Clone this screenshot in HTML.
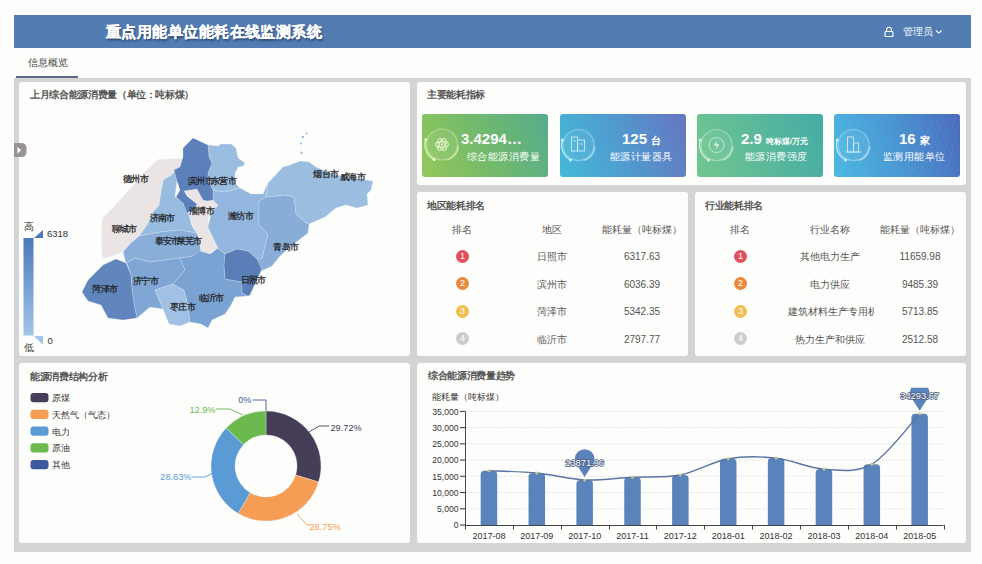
<!DOCTYPE html>
<html><head><meta charset="utf-8">
<style>
*{margin:0;padding:0;box-sizing:border-box}
html,body{width:982px;height:564px;overflow:hidden;background:#fdfdfb;font-family:"Liberation Sans",sans-serif;color:#555}
.abs{position:absolute}
#hdr{left:14px;top:15px;width:957px;height:33px;background:#527cb2}
#title{left:106px;top:19px;font-size:15px;font-weight:bold;color:#fff;letter-spacing:0.45px;-webkit-text-stroke:0.3px #fff;text-shadow:1px 2px 2px rgba(20,30,60,.6);white-space:nowrap;line-height:26px}
#user{left:903px;top:25px;font-size:10px;color:#fff;line-height:13px;white-space:nowrap}
#tab{left:28px;top:57px;font-size:10px;color:#444;line-height:12px}
#tabline{left:16px;top:76px;width:62px;height:2px;background:#5b6b86}
#frame{left:14px;top:78px;width:957px;height:474px;background:#d4d4d6}
.pnl{position:absolute;background:#fdfdfb;border-radius:3px}
.ttl{position:absolute;font-size:10px;font-weight:bold;color:#555;letter-spacing:-0.35px;white-space:nowrap;line-height:12px}
.card{position:absolute;top:114px;width:126px;height:63px;border-radius:3px;overflow:hidden}
.val{position:absolute;color:#fff;font-weight:bold;white-space:nowrap}
.lbl{position:absolute;color:#fff;font-size:10px;letter-spacing:0.45px;white-space:nowrap;line-height:12px}
.row{position:absolute;font-size:10px;color:#555;white-space:nowrap;line-height:12px;text-align:center}
.badge{position:absolute;width:13px;height:13px;border-radius:50%;color:#fff;font-size:9px;line-height:13px;text-align:center}
svg{position:absolute;left:0;top:0}
</style></head><body>
<div id="hdr" class="abs"></div>
<div id="title" class="abs">重点用能单位能耗在线监测系统</div>
<svg width="982" height="564" style="z-index:2">
  <!-- lock icon -->
  <g stroke="#fff" stroke-width="1.1" fill="none">
    <path d="M886.5 31.5 v-1.8 a2.5 2.5 0 0 1 5 0 v1.8"/>
    <rect x="885" y="31.5" width="8" height="5" rx="1"/>
    <path d="M936 30.5 l2.8 2.6 l2.8 -2.6"/>
  </g>
</svg>
<div id="user" class="abs">管理员</div>
<div id="tab" class="abs">信息概览</div>
<div id="tabline" class="abs"></div>
<div id="frame" class="abs"></div>

<div class="pnl" style="left:19px;top:82px;width:391px;height:274px"></div>
<div class="pnl" style="left:417px;top:82px;width:549px;height:103px"></div>
<div class="pnl" style="left:417px;top:192px;width:271px;height:164px"></div>
<div class="pnl" style="left:695px;top:192px;width:271px;height:164px"></div>
<div class="pnl" style="left:19px;top:363px;width:391px;height:180px"></div>
<div class="pnl" style="left:417px;top:363px;width:549px;height:180px"></div>

<div class="ttl" style="left:30px;top:89px">上月综合能源消费量（单位：吨标煤）</div>
<div class="ttl" style="left:427px;top:89px">主要能耗指标</div>
<div class="ttl" style="left:427px;top:200px">地区能耗排名</div>
<div class="ttl" style="left:705px;top:200px">行业能耗排名</div>
<div class="ttl" style="left:30px;top:370.5px">能源消费结构分析</div>
<div class="ttl" style="left:428px;top:370px">综合能源消费量趋势</div>

<!-- KPI cards -->
<div class="card" style="left:422px;background:linear-gradient(65deg,#94c85a 0%,#72b96c 50%,#55ad8e 100%)"></div>
<div class="card" style="left:560px;background:linear-gradient(70deg,#43bad8 0%,#5199cf 50%,#6676c0 100%)"></div>
<div class="card" style="left:697px;background:linear-gradient(70deg,#72c78e 0%,#5bb99a 50%,#45aba6 100%)"></div>
<div class="card" style="left:834px;background:linear-gradient(75deg,#4db9e3 0%,#4b96d2 50%,#4a6abd 100%)"></div>

<div class="val" style="left:461px;top:130px;font-size:15px">3.4294…</div>
<div class="lbl" style="left:467px;top:151px">综合能源消费量</div>
<div class="val" style="left:622px;top:130px;font-size:15px">125 <span style="font-size:10px">台</span></div>
<div class="lbl" style="left:610px;top:151px">能源计量器具</div>
<div class="val" style="left:741px;top:130px;font-size:15px">2.9 <span style="font-size:8px">吨标煤/万元</span></div>
<div class="lbl" style="left:745px;top:151px">能源消费强度</div>
<div class="val" style="left:899px;top:130px;font-size:15px">16 <span style="font-size:10px">家</span></div>
<div class="lbl" style="left:883px;top:151px">监测用能单位</div>

<!-- region ranking -->
<div class="row" style="left:417px;top:224px;width:90px">排名</div>
<div class="row" style="left:507px;top:224px;width:90px">地区</div>
<div class="row" style="left:597px;top:224px;width:90px">能耗量（吨标煤）</div>
<div class="badge" style="left:456px;top:250px;background:#e0505f">1</div>
<div class="badge" style="left:456px;top:277px;background:#e98a3c">2</div>
<div class="badge" style="left:456px;top:305px;background:#f2bd50">3</div>
<div class="badge" style="left:456px;top:332px;background:#cdcdcd">4</div>
<div class="row" style="left:507px;top:251px;width:90px">日照市</div>
<div class="row" style="left:507px;top:279px;width:90px">滨州市</div>
<div class="row" style="left:507px;top:306px;width:90px">菏泽市</div>
<div class="row" style="left:507px;top:334px;width:90px">临沂市</div>
<div class="row" style="left:597px;top:251px;width:90px">6317.63</div>
<div class="row" style="left:597px;top:279px;width:90px">6036.39</div>
<div class="row" style="left:597px;top:306px;width:90px">5342.35</div>
<div class="row" style="left:597px;top:334px;width:90px">2797.77</div>

<!-- industry ranking -->
<div class="row" style="left:695px;top:224px;width:90px">排名</div>
<div class="row" style="left:785px;top:224px;width:90px">行业名称</div>
<div class="row" style="left:875px;top:224px;width:90px">能耗量（吨标煤）</div>
<div class="badge" style="left:734px;top:250px;background:#e0505f">1</div>
<div class="badge" style="left:734px;top:277px;background:#e98a3c">2</div>
<div class="badge" style="left:734px;top:305px;background:#f2bd50">3</div>
<div class="badge" style="left:734px;top:332px;background:#cdcdcd">4</div>
<div class="row" style="left:785px;top:251px;width:90px">其他电力生产</div>
<div class="row" style="left:785px;top:279px;width:90px">电力供应</div>
<div class="row" style="left:788px;top:306px;width:86px;overflow:hidden;text-align:left">建筑材料生产专用机械</div>
<div class="row" style="left:785px;top:334px;width:90px">热力生产和供应</div>
<div class="row" style="left:875px;top:251px;width:90px">11659.98</div>
<div class="row" style="left:875px;top:279px;width:90px">9485.39</div>
<div class="row" style="left:875px;top:306px;width:90px">5713.85</div>
<div class="row" style="left:875px;top:334px;width:90px">2512.58</div>

<!--CARDS--><svg width="982" height="564" style="z-index:3"><circle cx="442" cy="144.5" r="15.5" fill="#fff" fill-opacity="0.07" stroke="#e8f5c8" stroke-opacity="0.45" stroke-width="1.2"/><path d="M434.82,159.91 A17,17 0 0 1 426.03,138.69" fill="none" stroke="#e8f5c8" stroke-opacity="0.9" stroke-width="1.3"/><path d="M458.44,145.94 A16.5,16.5 0 0 1 447.64,160.00" fill="none" stroke="#e8f5c8" stroke-opacity="0.75" stroke-width="1.3"/><circle cx="434.02" cy="159.51" r="1.5" fill="#e8f5c8"/><circle cx="425.74" cy="139.53" r="1.5" fill="#e8f5c8"/><g fill="none" stroke="#e8f5d0" stroke-width="1.1" stroke-opacity="0.9"><ellipse cx="442" cy="144.5" rx="6.5" ry="2.9"/><ellipse cx="442" cy="144.5" rx="6.5" ry="2.9" transform="rotate(60 442 144.5)"/><ellipse cx="442" cy="144.5" rx="6.5" ry="2.9" transform="rotate(-60 442 144.5)"/></g><circle cx="442" cy="144.5" r="1.2" fill="#e8f5d0"/><circle cx="578.5" cy="145" r="15.5" fill="#fff" fill-opacity="0.07" stroke="#c8eef8" stroke-opacity="0.45" stroke-width="1.2"/><path d="M571.32,160.41 A17,17 0 0 1 562.53,139.19" fill="none" stroke="#c8eef8" stroke-opacity="0.9" stroke-width="1.3"/><path d="M594.94,146.44 A16.5,16.5 0 0 1 584.14,160.50" fill="none" stroke="#c8eef8" stroke-opacity="0.75" stroke-width="1.3"/><circle cx="570.52" cy="160.01" r="1.5" fill="#c8eef8"/><circle cx="562.24" cy="140.03" r="1.5" fill="#c8eef8"/><g fill="none" stroke="#d8f2fa" stroke-width="0.9" stroke-opacity="0.9"><rect x="571.5" y="137" width="6" height="14"/><rect x="577.5" y="140" width="7" height="11"/><line x1="573.0" y1="141" x2="576.0" y2="141"/><line x1="579.5" y1="144" x2="582.5" y2="144"/></g><circle cx="716.5" cy="145" r="15.5" fill="#fff" fill-opacity="0.07" stroke="#d8f4e0" stroke-opacity="0.45" stroke-width="1.2"/><path d="M709.32,160.41 A17,17 0 0 1 700.53,139.19" fill="none" stroke="#d8f4e0" stroke-opacity="0.9" stroke-width="1.3"/><path d="M732.94,146.44 A16.5,16.5 0 0 1 722.14,160.50" fill="none" stroke="#d8f4e0" stroke-opacity="0.75" stroke-width="1.3"/><circle cx="708.52" cy="160.01" r="1.5" fill="#d8f4e0"/><circle cx="700.24" cy="140.03" r="1.5" fill="#d8f4e0"/><circle cx="716.5" cy="145" r="7.5" fill="none" stroke="#e0f6e8" stroke-opacity="0.8" stroke-width="0.9"/><path d="M717.5,140 L714.0,145.5 H717.0 L715.5,150 L719.3,144.2 H716.3 Z" fill="#e8f8ee"/><circle cx="853.5" cy="145" r="15.5" fill="#fff" fill-opacity="0.07" stroke="#c8eef8" stroke-opacity="0.45" stroke-width="1.2"/><path d="M846.32,160.41 A17,17 0 0 1 837.53,139.19" fill="none" stroke="#c8eef8" stroke-opacity="0.9" stroke-width="1.3"/><path d="M869.94,146.44 A16.5,16.5 0 0 1 859.14,160.50" fill="none" stroke="#c8eef8" stroke-opacity="0.75" stroke-width="1.3"/><circle cx="845.52" cy="160.01" r="1.5" fill="#c8eef8"/><circle cx="837.24" cy="140.03" r="1.5" fill="#c8eef8"/><g fill="none" stroke="#d8f2fa" stroke-width="0.9" stroke-opacity="0.9"><rect x="847.5" y="137" width="6" height="15"/><rect x="853.5" y="143" width="5" height="9"/><line x1="845.5" y1="152" x2="861.5" y2="152"/></g><line x1="900" y1="177" x2="935" y2="118" stroke="#fff" stroke-opacity="0.07" stroke-width="0.7"/><line x1="915" y1="118" x2="950" y2="177" stroke="#fff" stroke-opacity="0.06" stroke-width="0.7"/><line x1="909" y1="177" x2="940" y2="118" stroke="#fff" stroke-opacity="0.07" stroke-width="0.7"/><line x1="922" y1="118" x2="953" y2="177" stroke="#fff" stroke-opacity="0.06" stroke-width="0.7"/><line x1="918" y1="177" x2="945" y2="118" stroke="#fff" stroke-opacity="0.07" stroke-width="0.7"/><line x1="929" y1="118" x2="956" y2="177" stroke="#fff" stroke-opacity="0.06" stroke-width="0.7"/><line x1="927" y1="177" x2="950" y2="118" stroke="#fff" stroke-opacity="0.07" stroke-width="0.7"/><line x1="936" y1="118" x2="959" y2="177" stroke="#fff" stroke-opacity="0.06" stroke-width="0.7"/><line x1="936" y1="177" x2="955" y2="118" stroke="#fff" stroke-opacity="0.07" stroke-width="0.7"/><line x1="943" y1="118" x2="962" y2="177" stroke="#fff" stroke-opacity="0.06" stroke-width="0.7"/><line x1="945" y1="177" x2="960" y2="118" stroke="#fff" stroke-opacity="0.07" stroke-width="0.7"/><line x1="950" y1="118" x2="965" y2="177" stroke="#fff" stroke-opacity="0.06" stroke-width="0.7"/></svg><!--/CARDS--><!--LEGEND--><svg width="982" height="564" style="z-index:3">
<defs><linearGradient id="vm" x1="0" y1="0" x2="0" y2="1"><stop offset="0" stop-color="#4a79b9"/><stop offset="1" stop-color="#a3c6e8"/></linearGradient></defs>
<rect x="23.5" y="238" width="10" height="97.5" fill="url(#vm)"/>
<path d="M34,238 L43,230 L43,238 Z" fill="#4a79b9"/>
<path d="M34,336 L43,336 L43,345 Z" fill="#a3c6e8"/>
<text x="47" y="237.2" font-size="9.5" fill="#333">6318</text>
<text x="47.5" y="343.5" font-size="9.5" fill="#333">0</text>
<text x="23.5" y="230" font-size="9.5" fill="#333">高</text>
<text x="23.5" y="351" font-size="9.5" fill="#333">低</text>
<path d="M14,143 H21 Q26.5,143 26.5,148.5 V151.5 Q26.5,157 21,157 H14 Z" fill="#989292"/>
<path d="M17.4,147 L21.3,150.2 L17.4,153.4 Z" fill="#fff"/>
</svg>
<!--/LEGEND--><!--MAP--><svg width="982" height="564" style="z-index:3"><g fill="#9bbde0"><circle cx="303" cy="137" r="1.3"/><circle cx="306.5" cy="133.5" r="1"/><circle cx="301" cy="143.5" r="1.1"/><circle cx="301.5" cy="153" r="1.2"/></g><g stroke="#e8eef6" stroke-opacity="0.5" stroke-width="0.5" stroke-linejoin="round"><polygon points="158,159.6 181.5,158.5 183.6,160.6 175,171.3 170.9,175.5 163.4,179.8 160.2,196.8 159.1,205.3 151.7,213.8 147.4,224.5 139,235 130.4,243.6 121.9,252.1 111.3,256.4 102.8,258.5 101.7,252.1 101.7,224.5 102.8,218 113.4,207.4 119.8,199.9 132.6,186.2 143.2,173.4" fill="#ebe4e4"/><polygon points="184,191 197,189 203,200 212,200 218,204 208,218 209,230 213.5,240 218,248 208,254 201,252 199,241 196.5,234 189.5,217 194,211 197,204" fill="#ebe4e4"/><polygon points="163.4,179.8 170.9,175.5 175,171.3 177,180 175,196.8 181.5,201 188,212 192,226 196.5,233 179.4,230 160.2,232 139,236 147.4,224.5 151.7,213.8 159.1,205.3 160.2,196.8" fill="#98bce0"/><polygon points="139,236 160.2,232 179.4,230 196.5,233 199.4,241 200.8,252.4 193,256 180,258 165,260 150,262 135,258 126,263 123,252 130.4,243.6" fill="#88aed9"/><polygon points="123,252 126,263 135,258 150,262 165,260 180,258 185,270 173,284 155,290 163,309 150,307 137,318 135,309 132,290 131,275" fill="#7fa6d4"/><polygon points="82,292 88,280 103,265 116,259 126,263 131,275 132,290 135,309 137,318 123,320 108,318 101,305 88,301" fill="#6086bd"/><polygon points="155,290 173,284 184,290 188,305 190,322 180,326 169,324 163,309" fill="#a0c1e3"/><polygon points="180,258 193,256 200,251 210,254 218,248 225,254 224,265 225,279 242,282 242,293 248,296 235,297 231,305 225,314 212,320 208,328 201,324 190,322 188,305 184,290 173,284 185,270" fill="#7aa2d2"/><polygon points="213,190 225,192 240,188 251,194 263,194 268,183 266,197 259,201 259,225 268,234 262,259 257,259 248,251 237,249 225,254 218,248 214,240 208,227 211,214 218,205 213,200" fill="#92b6de"/><polygon points="259,201 266,197 285,195 294,197 296,214 305,222 309,224 308,233 295,243 280,256 272,266 261,271 257,259 262,259 268,234 259,225" fill="#87add8"/><polygon points="225,254 237,249 248,251 257,259 261,268 261,271 255,284 250,295 248,296 242,293 242,282 225,279 224,265" fill="#5a7eb7"/><polygon points="268,183 283,167 290,165 300,161 309,162 316,167 332,174 353,178 373,181 371,190 367,194 368,205 357,208 346,205 336,208 325,217 309,224 305,222 296,214 294,197 285,195 266,197" fill="#9bbde0"/><polygon points="208,145 218,146 221,144 231,144 236,148 238,158 245,163 243,166 238,167 235,173 235,183 240,188 225,192 213,190 208,181 208,173 212,163 209,157" fill="#9bbde0"/><polygon points="193,138 208,145 209,157 212,163 208,173 208,181 213,190 213,200 207,201 203,200 197,189 184,191 187,196 197,204 194,211 187,213 183,203 176,197 180,190 177,181 174,170 180,167 183,157 183,148" fill="#5c81ba"/></g><g font-size="9" letter-spacing="-0.55" fill="#1e1e1e" stroke="#1e1e1e" stroke-width="0.25"><text x="123.0" y="181.8">德州市</text><text x="111.5" y="231.5">聊城市</text><text x="149.5" y="220.8">济南市</text><text x="154.5" y="244.3">泰安市</text><text x="176.5" y="244.3">莱芜市</text><text x="188.7" y="213.7">淄博市</text><text x="227.9" y="219.4">潍坊市</text><text x="187.9" y="183.5">滨州市</text><text x="210.9" y="183.5">东营市</text><text x="313.1" y="177.3">烟台市</text><text x="339.7" y="179.5">威海市</text><text x="273.1" y="250.2">青岛市</text><text x="240.5" y="282.6">日照市</text><text x="198.6" y="300.7">临沂市</text><text x="169.9" y="310.2">枣庄市</text><text x="132.7" y="283.6">济宁市</text><text x="92.3" y="291.5">菏泽市</text></g></svg><!--/MAP-->
<!--DONUT--><svg width="982" height="564" style="z-index:3"><g font-size="9.2"><path d="M266.00,411.00 A55,55 0 0 1 318.60,482.07 L295.65,475.06 A31,31 0 0 0 266.00,435.00 Z" fill="#463e58" stroke="#fff" stroke-width="0.3"/><path d="M318.60,482.07 A55,55 0 0 1 238.09,513.39 L250.27,492.71 A31,31 0 0 0 295.65,475.06 Z" fill="#f59d55" stroke="#fff" stroke-width="0.3"/><path d="M238.09,513.39 A55,55 0 0 1 226.14,428.10 L243.54,444.64 A31,31 0 0 0 250.27,492.71 Z" fill="#5b9bd5" stroke="#fff" stroke-width="0.3"/><path d="M226.14,428.10 A55,55 0 0 1 266.00,411.00 L266.00,435.00 A31,31 0 0 0 243.54,444.64 Z" fill="#6cb94e" stroke="#fff" stroke-width="0.3"/><path d="M309,432 L319,426 L329,426" fill="none" stroke="#463e58" stroke-width="0.9"/><path d="M297,514 L307,525 L310,525" fill="none" stroke="#f59d55" stroke-width="0.9"/><path d="M213,473 L205,477 L192,477" fill="none" stroke="#5b9bd5" stroke-width="0.9"/><path d="M243,415 L230,409 L216,409" fill="none" stroke="#6cb94e" stroke-width="0.9"/><path d="M266,411 L266,400 L253,400" fill="none" stroke="#3d5a9e" stroke-width="0.9"/><text x="330.5" y="430.6" fill="#463e58" text-anchor="start">29.72%</text><text x="309.5" y="529.8" fill="#f59d55" text-anchor="start">28.75%</text><text x="191.5" y="480.0" fill="#5b9bd5" text-anchor="end">28.63%</text><text x="215.5" y="413.1" fill="#6cb94e" text-anchor="end">12.9%</text><text x="251.5" y="403.3" fill="#3d5a9e" text-anchor="end">0%</text><rect x="30.5" y="393.00" width="18" height="9.2" rx="3" fill="#463e58"/><text x="51.7" y="401.00" fill="#333" font-size="9.3">原煤</text><rect x="30.5" y="409.75" width="18" height="9.2" rx="3" fill="#f59d55"/><text x="51.7" y="417.75" fill="#333" font-size="9.3">天然气（气态）</text><rect x="30.5" y="426.50" width="18" height="9.2" rx="3" fill="#5b9bd5"/><text x="51.7" y="434.50" fill="#333" font-size="9.3">电力</text><rect x="30.5" y="443.25" width="18" height="9.2" rx="3" fill="#6cb94e"/><text x="51.7" y="451.25" fill="#333" font-size="9.3">原油</text><rect x="30.5" y="460.00" width="18" height="9.2" rx="3" fill="#3d5a9e"/><text x="51.7" y="468.00" fill="#333" font-size="9.3">其他</text></g></svg><!--/DONUT-->
<!--BAR--><svg width="982" height="564" style="z-index:3"><g font-size="9" fill="#333"><line x1="465" y1="508.77" x2="943.6" y2="508.77" stroke="#e0e0e0" stroke-width="1" stroke-dasharray="1.5,1.5"/><line x1="465" y1="492.54" x2="943.6" y2="492.54" stroke="#e0e0e0" stroke-width="1" stroke-dasharray="1.5,1.5"/><line x1="465" y1="476.31" x2="943.6" y2="476.31" stroke="#e0e0e0" stroke-width="1" stroke-dasharray="1.5,1.5"/><line x1="465" y1="460.08" x2="943.6" y2="460.08" stroke="#e0e0e0" stroke-width="1" stroke-dasharray="1.5,1.5"/><line x1="465" y1="443.85" x2="943.6" y2="443.85" stroke="#e0e0e0" stroke-width="1" stroke-dasharray="1.5,1.5"/><line x1="465" y1="427.62" x2="943.6" y2="427.62" stroke="#e0e0e0" stroke-width="1" stroke-dasharray="1.5,1.5"/><line x1="465" y1="411.39" x2="943.6" y2="411.39" stroke="#e0e0e0" stroke-width="1" stroke-dasharray="1.5,1.5"/><line x1="465.5" y1="411.39" x2="465.5" y2="525.5" stroke="#444" stroke-width="1"/><line x1="465" y1="525.5" x2="943.6" y2="525.5" stroke="#444" stroke-width="1"/><line x1="460" y1="525.00" x2="465" y2="525.00" stroke="#333" stroke-width="1"/><text x="458.5" y="528.20" text-anchor="end" font-size="8.6">0</text><line x1="460" y1="508.77" x2="465" y2="508.77" stroke="#333" stroke-width="1"/><text x="458.5" y="511.97" text-anchor="end" font-size="8.6">5,000</text><line x1="460" y1="492.54" x2="465" y2="492.54" stroke="#333" stroke-width="1"/><text x="458.5" y="495.74" text-anchor="end" font-size="8.6">10,000</text><line x1="460" y1="476.31" x2="465" y2="476.31" stroke="#333" stroke-width="1"/><text x="458.5" y="479.51" text-anchor="end" font-size="8.6">15,000</text><line x1="460" y1="460.08" x2="465" y2="460.08" stroke="#333" stroke-width="1"/><text x="458.5" y="463.28" text-anchor="end" font-size="8.6">20,000</text><line x1="460" y1="443.85" x2="465" y2="443.85" stroke="#333" stroke-width="1"/><text x="458.5" y="447.05" text-anchor="end" font-size="8.6">25,000</text><line x1="460" y1="427.62" x2="465" y2="427.62" stroke="#333" stroke-width="1"/><text x="458.5" y="430.82" text-anchor="end" font-size="8.6">30,000</text><line x1="460" y1="411.39" x2="465" y2="411.39" stroke="#333" stroke-width="1"/><text x="458.5" y="414.59" text-anchor="end" font-size="8.6">35,000</text><line x1="465.50" y1="525.0" x2="465.50" y2="529.5" stroke="#444" stroke-width="1"/><line x1="513.50" y1="525.0" x2="513.50" y2="529.5" stroke="#444" stroke-width="1"/><line x1="561.50" y1="525.0" x2="561.50" y2="529.5" stroke="#444" stroke-width="1"/><line x1="609.50" y1="525.0" x2="609.50" y2="529.5" stroke="#444" stroke-width="1"/><line x1="656.50" y1="525.0" x2="656.50" y2="529.5" stroke="#444" stroke-width="1"/><line x1="704.50" y1="525.0" x2="704.50" y2="529.5" stroke="#444" stroke-width="1"/><line x1="752.50" y1="525.0" x2="752.50" y2="529.5" stroke="#444" stroke-width="1"/><line x1="800.50" y1="525.0" x2="800.50" y2="529.5" stroke="#444" stroke-width="1"/><line x1="848.50" y1="525.0" x2="848.50" y2="529.5" stroke="#444" stroke-width="1"/><line x1="896.50" y1="525.0" x2="896.50" y2="529.5" stroke="#444" stroke-width="1"/><line x1="944.50" y1="525.0" x2="944.50" y2="529.5" stroke="#444" stroke-width="1"/><path d="M480.68,525.0 V474.70 Q480.68,470.70 484.68,470.70 H493.18 Q497.18,470.70 497.18,474.70 V525.0 Z" fill="#5a82bb"/><text x="488.93" y="538.50" text-anchor="middle">2017-08</text><path d="M528.54,525.0 V477.00 Q528.54,473.00 532.54,473.00 H541.04 Q545.04,473.00 545.04,477.00 V525.0 Z" fill="#5a82bb"/><text x="536.79" y="538.50" text-anchor="middle">2017-09</text><path d="M576.40,525.0 V483.97 Q576.40,479.97 580.40,479.97 H588.90 Q592.90,479.97 592.90,483.97 V525.0 Z" fill="#5a82bb"/><text x="584.65" y="538.50" text-anchor="middle">2017-10</text><path d="M624.26,525.0 V481.20 Q624.26,477.20 628.26,477.20 H636.76 Q640.76,477.20 640.76,481.20 V525.0 Z" fill="#5a82bb"/><text x="632.51" y="538.50" text-anchor="middle">2017-11</text><path d="M672.12,525.0 V479.01 Q672.12,475.01 676.12,475.01 H684.62 Q688.62,475.01 688.62,479.01 V525.0 Z" fill="#5a82bb"/><text x="680.37" y="538.50" text-anchor="middle">2017-12</text><path d="M719.98,525.0 V462.70 Q719.98,458.70 723.98,458.70 H732.48 Q736.48,458.70 736.48,462.70 V525.0 Z" fill="#5a82bb"/><text x="728.23" y="538.50" text-anchor="middle">2018-01</text><path d="M767.84,525.0 V462.10 Q767.84,458.10 771.84,458.10 H780.34 Q784.34,458.10 784.34,462.10 V525.0 Z" fill="#5a82bb"/><text x="776.09" y="538.50" text-anchor="middle">2018-02</text><path d="M815.70,525.0 V473.10 Q815.70,469.10 819.70,469.10 H828.20 Q832.20,469.10 832.20,473.10 V525.0 Z" fill="#5a82bb"/><text x="823.95" y="538.50" text-anchor="middle">2018-03</text><path d="M863.56,525.0 V468.20 Q863.56,464.20 867.56,464.20 H876.06 Q880.06,464.20 880.06,468.20 V525.0 Z" fill="#5a82bb"/><text x="871.81" y="538.50" text-anchor="middle">2018-04</text><path d="M911.42,525.0 V417.68 Q911.42,413.68 915.42,413.68 H923.92 Q927.92,413.68 927.92,417.68 V525.0 Z" fill="#5a82bb"/><text x="919.67" y="538.50" text-anchor="middle">2018-05</text><path d="M488.93,470.70 C496.91,471.08 520.84,471.45 536.79,473.00 C552.74,474.54 568.70,479.27 584.65,479.97 C600.60,480.67 616.56,478.03 632.51,477.20 C648.46,476.38 664.42,478.10 680.37,475.01 C696.32,471.93 712.28,461.52 728.23,458.70 C744.18,455.88 760.14,456.37 776.09,458.10 C792.04,459.83 808.00,468.09 823.95,469.10 C839.90,470.12 855.86,473.44 871.81,464.20 C887.76,454.97 911.69,422.10 919.67,413.68" fill="none" stroke="#5a75a3" stroke-width="1.4"/><circle cx="488.93" cy="470.70" r="1.5" fill="#c9c48a"/><circle cx="536.79" cy="473.00" r="1.5" fill="#c9c48a"/><circle cx="584.65" cy="479.97" r="1.5" fill="#c9c48a"/><circle cx="632.51" cy="477.20" r="1.5" fill="#c9c48a"/><circle cx="680.37" cy="475.01" r="1.5" fill="#c9c48a"/><circle cx="728.23" cy="458.70" r="1.5" fill="#c9c48a"/><circle cx="776.09" cy="458.10" r="1.5" fill="#c9c48a"/><circle cx="823.95" cy="469.10" r="1.5" fill="#c9c48a"/><circle cx="871.81" cy="464.20" r="1.5" fill="#c9c48a"/><circle cx="919.67" cy="413.68" r="1.5" fill="#c9c48a"/><path d="M584.65,476.97 L577.14,465.27 A9.8,9.8 0 1 1 592.16,465.27 Z" fill="#5a82bb"/><text x="584.65" y="465.77" text-anchor="middle" fill="#fff" stroke="#4d5d80" stroke-width="1.6" paint-order="stroke" font-size="9.3">13871.96</text><defs><clipPath id="pc"><rect x="880" y="387.8" width="80" height="40"/></clipPath></defs><path d="M919.67,410.68 L912.16,398.98 A9.8,9.8 0 1 1 927.18,398.98 Z" fill="#5a82bb" clip-path="url(#pc)"/><text x="919.67" y="399.48" text-anchor="middle" fill="#fff" stroke="#4d5d80" stroke-width="1.6" paint-order="stroke" font-size="9.3">34293.67</text><text x="431.6" y="399.5" font-size="9.3" fill="#333">能耗量（吨标煤）</text></g></svg><!--/BAR-->
</body></html>
